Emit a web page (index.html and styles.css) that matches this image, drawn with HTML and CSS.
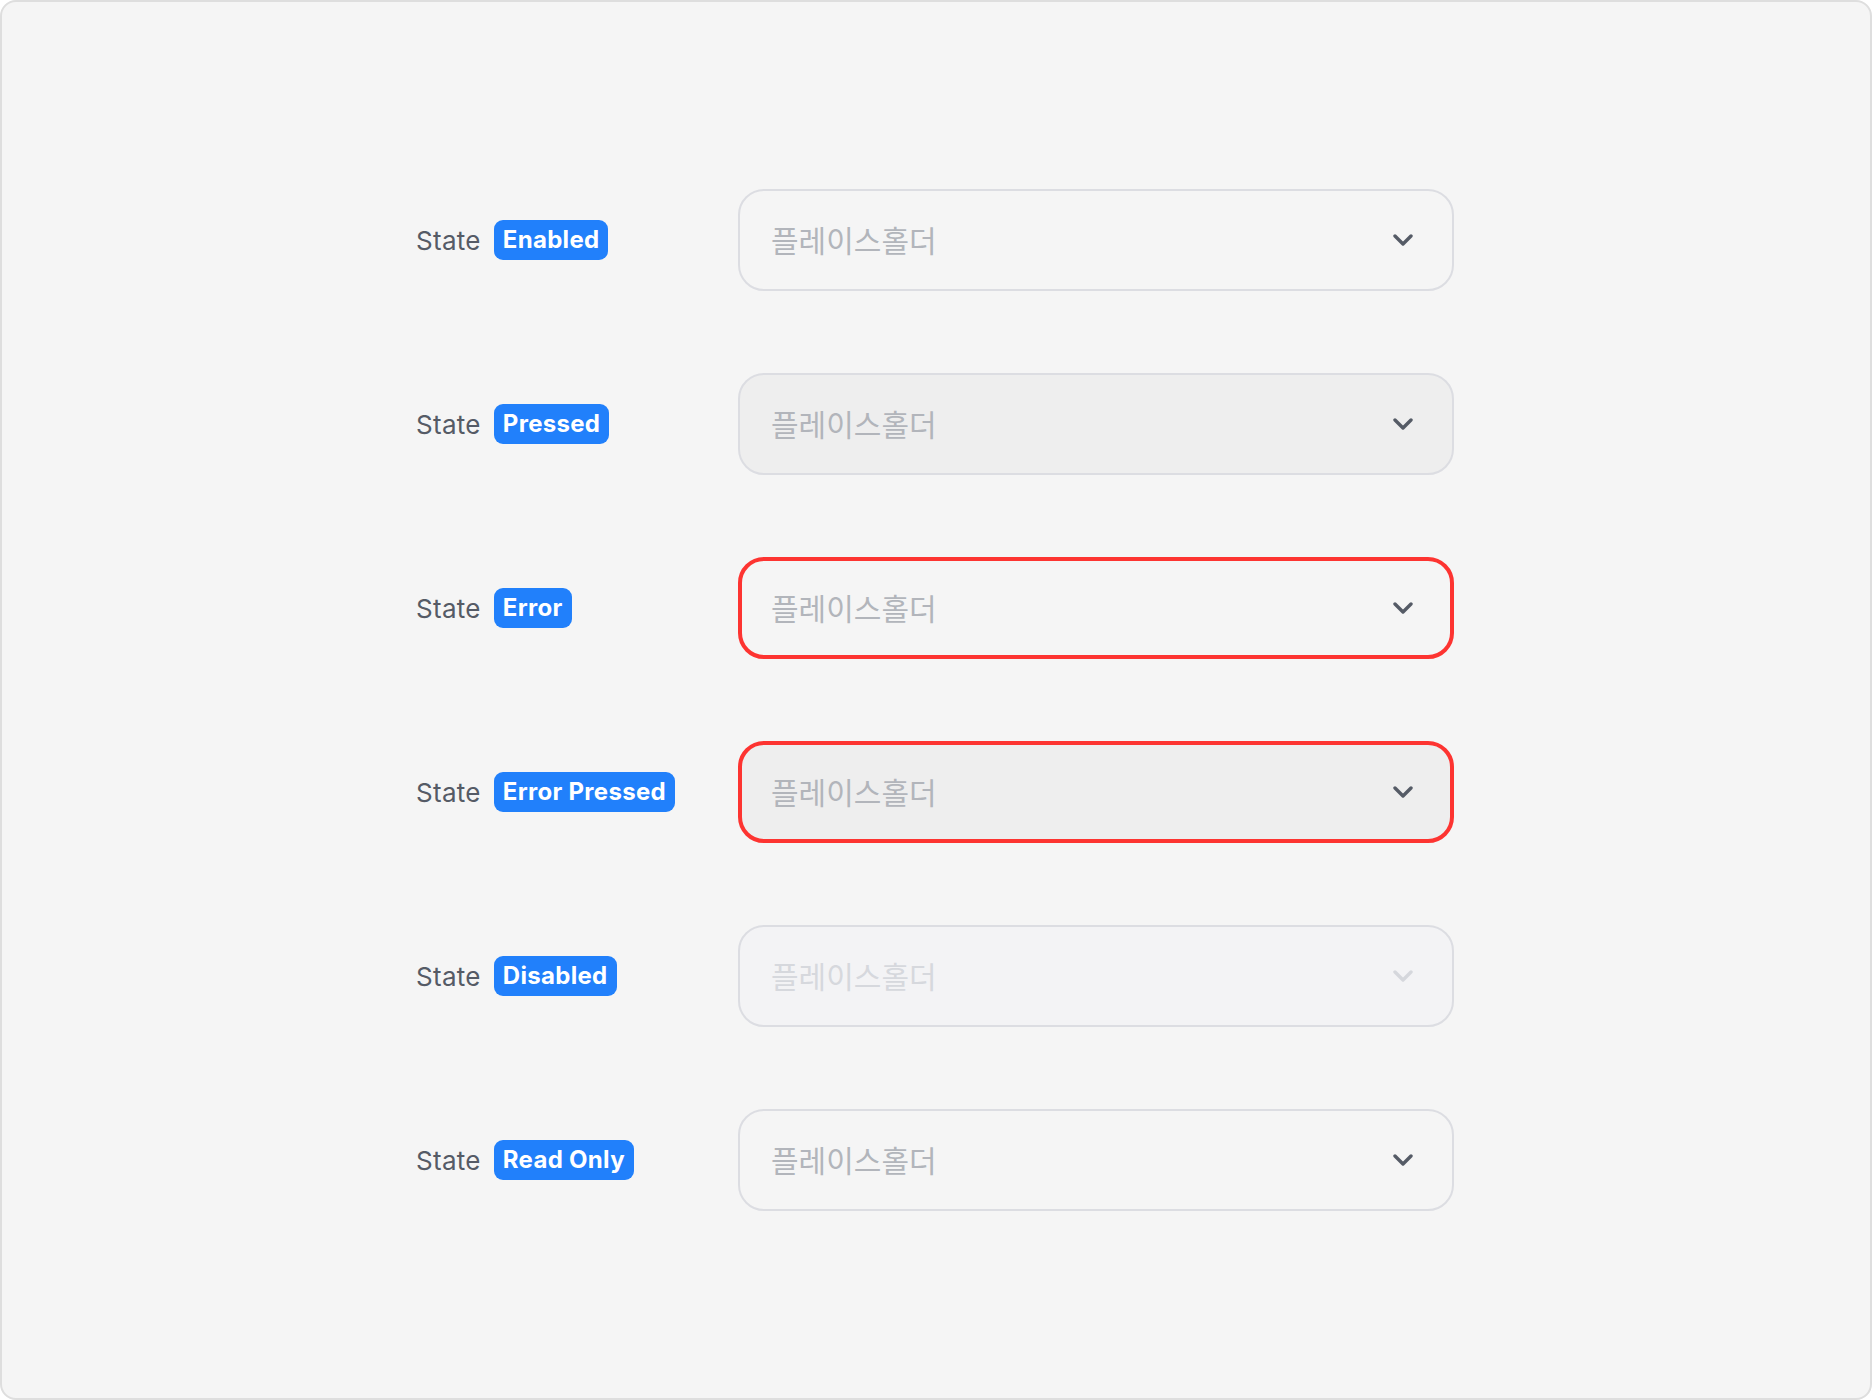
FILE: index.html
```html
<!DOCTYPE html>
<html lang="ko">
<head>
<meta charset="utf-8">
<title>Select States</title>
<link rel="stylesheet" href="styles.css">
</head>
<body>
<div class="frame">
  <div class="list">
    <div class="row">
      <div class="label"><span class="state">State</span><span class="badge">Enabled</span></div>
      <div class="select"><span class="ph">플레이스홀더</span><svg class="chev" viewBox="0 0 20 12"><path d="M2 2 L10 10 L18 2"/></svg></div>
    </div>
    <div class="row">
      <div class="label"><span class="state">State</span><span class="badge">Pressed</span></div>
      <div class="select pressed"><span class="ph">플레이스홀더</span><svg class="chev" viewBox="0 0 20 12"><path d="M2 2 L10 10 L18 2"/></svg></div>
    </div>
    <div class="row">
      <div class="label"><span class="state">State</span><span class="badge">Error</span></div>
      <div class="select error"><span class="ph">플레이스홀더</span><svg class="chev" viewBox="0 0 20 12"><path d="M2 2 L10 10 L18 2"/></svg></div>
    </div>
    <div class="row">
      <div class="label"><span class="state">State</span><span class="badge">Error Pressed</span></div>
      <div class="select error pressed"><span class="ph">플레이스홀더</span><svg class="chev" viewBox="0 0 20 12"><path d="M2 2 L10 10 L18 2"/></svg></div>
    </div>
    <div class="row">
      <div class="label"><span class="state">State</span><span class="badge">Disabled</span></div>
      <div class="select disabled"><span class="ph">플레이스홀더</span><svg class="chev" viewBox="0 0 20 12"><path d="M2 2 L10 10 L18 2"/></svg></div>
    </div>
    <div class="row">
      <div class="label"><span class="state">State</span><span class="badge">Read Only</span></div>
      <div class="select"><span class="ph">플레이스홀더</span><svg class="chev" viewBox="0 0 20 12"><path d="M2 2 L10 10 L18 2"/></svg></div>
    </div>
  </div>
</div>
</body>
</html>
```
FILE: styles.css
```css
html, body {
  margin: 0;
  padding: 0;
  background: #ffffff;
}
body {
  font-family: Inter, "Noto Sans", "Noto Sans CJK KR", sans-serif;
}
.frame {
  box-sizing: border-box;
  width: 1872px;
  height: 1400px;
  border: 2px solid #dedede;
  border-radius: 16px;
  background: #f5f5f5;
  padding: 187px 0 0 414px;
}
.list {
  display: flex;
  flex-direction: column;
  gap: 82px;
}
.row {
  display: grid;
  grid-template-columns: 322px 716px;
  align-items: center;
  height: 102px;
}
.label {
  display: flex;
  align-items: center;
  gap: 13px;
}
.state {
  font-size: 26px;
  color: #555b66;
  letter-spacing: 0.3px;
}
.badge {
  background: #2180fb;
  color: #ffffff;
  font-weight: 700;
  font-size: 24px;
  line-height: 40px;
  height: 40px;
  padding: 0 9px;
  border-radius: 9px;
  letter-spacing: 0.3px;
}
.select {
  box-sizing: border-box;
  height: 102px;
  border: 2px solid #dcdde2;
  border-radius: 26px;
  background: #f5f5f5;
  display: flex;
  align-items: center;
  justify-content: space-between;
  padding: 0 39px 0 31px;
}
.select.pressed {
  background: #eeeeee;
}
.select.error {
  border: 4px solid #fd3431;
  padding: 0 37px 0 29px;
}
.select.disabled {
  background: #f3f3f5;
}
.ph {
  font-family: "Noto Sans CJK KR", sans-serif;
  font-size: 30px;
  font-weight: 400;
  color: #b2b5bb;
  margin-bottom: 3px;
}
.select.disabled .ph {
  color: #d6d8dd;
}
.chev {
  width: 20px;
  height: 12px;
  fill: none;
  stroke: #555b66;
  stroke-width: 3.4;
  stroke-linecap: round;
  stroke-linejoin: round;
}
.select.disabled .chev {
  stroke: #d5d7dc;
}
```
